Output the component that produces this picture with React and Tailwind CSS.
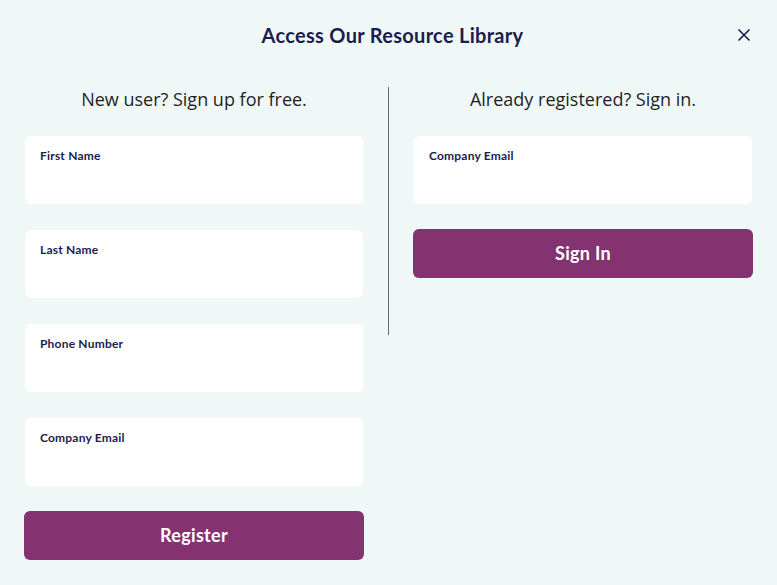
import React, { useState } from "react";

const Field = ({ label, name, value, onChange }) => (
    <label className="mx-px block h-[68px] rounded-md bg-white px-[15px] pt-[13px]">
        <span className="block font-['Lato',sans-serif] text-[12px] font-bold leading-[14px] tracking-[0.2px] text-[#1b1d4f]">
            {label}
        </span>
        <input
            type="text"
            name={name}
            value={value}
            onChange={onChange}
            className="mt-1 w-full bg-transparent text-sm outline-none"
        />
    </label>
);

const App = () => {
    const [formData, setFormData] = useState({
        first_name: "",
        last_name: "",
        phone: "",
        email: "",
        login_email: ""
    });

    const handleInputChange = (e) => {
        const { name, value } = e.target;
        setFormData({ ...formData, [name]: value });
    };

    return (
        <div className="min-h-[585px] w-[777px] bg-[#f0f7f7] px-6">
            {/* header */}
            <div className="relative flex h-[70px] items-center justify-center">
                <h1 className="ml-[8px] font-['Lato',sans-serif] text-[20px] font-bold tracking-[0.3px] text-[#1b1d4f]">
                    Access Our Resource Library
                </h1>
                <button className="absolute right-[0px] top-[26px] text-[#1b1d4f]">
                    <svg width="18" height="18" viewBox="0 0 18 18" fill="none" stroke="currentColor" strokeWidth="1.6">
                        <path d="M3.5 3.5l11 11M14.5 3.5l-11 11" />
                    </svg>
                </button>
            </div>

            <div className="mt-[17px] flex">
                {/* sign up */}
                <div className="w-[340px]">
                    <h2 className="text-center font-['Open_Sans',sans-serif] text-[18px] leading-[24px] text-[#1f1f1f]">
                        New user? Sign up for free.
                    </h2>
                    <div className="mt-[25px] flex flex-col gap-[26px]">
                        <Field label="First Name" name="first_name" value={formData.first_name} onChange={handleInputChange} />
                        <Field label="Last Name" name="last_name" value={formData.last_name} onChange={handleInputChange} />
                        <Field label="Phone Number" name="phone" value={formData.phone} onChange={handleInputChange} />
                        <Field label="Company Email" name="email" value={formData.email} onChange={handleInputChange} />
                    </div>
                    <button className="mt-[25px] h-[49px] w-full rounded-md bg-[#843370] font-['Lato',sans-serif] text-[18px] font-bold tracking-[0.3px] text-white">
                        Register
                    </button>
                </div>

                <div className="mx-6 h-[248px] w-px bg-[#5f6b73]" />

                {/* sign in */}
                <div className="w-[340px]">
                    <h2 className="text-center font-['Open_Sans',sans-serif] text-[18px] leading-[24px] text-[#1f1f1f]">
                        Already registered? Sign in.
                    </h2>
                    <div className="mt-[25px]">
                        <Field label="Company Email" name="login_email" value={formData.login_email} onChange={handleInputChange} />
                    </div>
                    <button className="mt-[25px] h-[49px] w-full rounded-md bg-[#843370] font-['Lato',sans-serif] text-[18px] font-bold tracking-[0.3px] text-white">
                        Sign In
                    </button>
                </div>
            </div>
        </div>
    );
};

export default App;
